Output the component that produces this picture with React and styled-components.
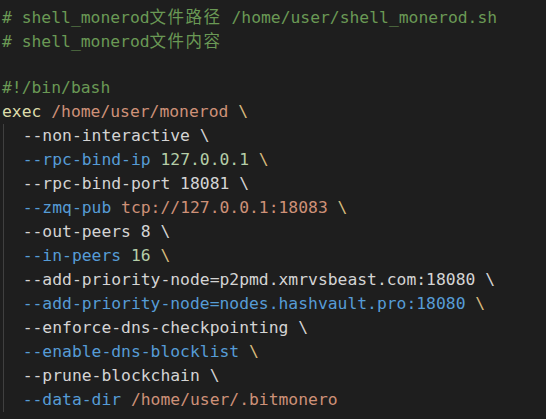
import React from "react";
import styled, { createGlobalStyle } from "styled-components";

const GlobalStyle = createGlobalStyle`
  html, body {
    margin: 0;
    padding: 0;
    background: #1e1e1e;
  }
`;

// token colours, vscode dark+ style
const colors = {
  comment: "#6a9955",
  cmd: "#dcdcaa",
  str: "#ce9178",
  esc: "#d7ba7d",
  flag: "#569cd6",
  num: "#b5cea8",
  plain: "#d4d4d4",
};

const header = [
  [["comment", "# shell_monerod"], ["cjk", "文件路径"], ["comment", " /home/user/shell_monerod.sh"]],
  [["comment", "# shell_monerod"], ["cjk", "文件内容"]],
  [],
  [["comment", "#!/bin/bash"]],
  [["cmd", "exec"], ["plain", " "], ["str", "/home/user/monerod"], ["plain", " "], ["esc", "\\"]],
];

const args = [
  [["plain", "--non-interactive \\"]],
  [["flag", "--rpc-bind-ip"], ["plain", " "], ["num", "127.0.0.1"], ["plain", " "], ["esc", "\\"]],
  [["plain", "--rpc-bind-port 18081 \\"]],
  [["flag", "--zmq-pub"], ["plain", " "], ["str", "tcp://127.0.0.1:18083"], ["plain", " "], ["esc", "\\"]],
  [["plain", "--out-peers 8 \\"]],
  [["flag", "--in-peers"], ["plain", " "], ["num", "16"], ["plain", " "], ["esc", "\\"]],
  [["plain", "--add-priority-node=p2pmd.xmrvsbeast.com:18080 \\"]],
  [["flag", "--add-priority-node=nodes.hashvault.pro:18080"], ["plain", " "], ["esc", "\\"]],
  [["plain", "--enforce-dns-checkpointing \\"]],
  [["flag", "--enable-dns-blocklist"], ["plain", " "], ["esc", "\\"]],
  [["plain", "--prune-blockchain \\"]],
  [["flag", "--data-dir"], ["plain", " "], ["str", "/home/user/.bitmonero"]],
];

const App = () => {
  const renderLine = (tokens, i) => (
    <Line key={i}>
      {tokens.length === 0 ? " " : null}
      {tokens.map(([kind, text], j) =>
        kind === "cjk" ? (
          <Cjk key={j}>{text}</Cjk>
        ) : (
          <Token key={j} kind={kind}>
            {text}
          </Token>
        )
      )}
    </Line>
  );

  return (
    <>
      <GlobalStyle />
      <Editor>
        {header.map(renderLine)}
        <Indented>{args.map(renderLine)}</Indented>
      </Editor>
    </>
  );
};

const Editor = styled.div`
  width: 546px;
  height: 419px;
  box-sizing: border-box;
  padding: 4px 0 0 2px;
  background: #1e1e1e;
  font-family: "DejaVu Sans Mono", "Noto Sans CJK SC", monospace;
  font-size: 16.35px;
  overflow: hidden;
`;

const Line = styled.div`
  height: 24px;
  line-height: 24px;
  white-space: pre;
`;

// indent guide on the continuation lines
const Indented = styled.div`
  border-left: 1px solid #404040;
  margin-left: 1px;
  padding-left: 18.7px;
`;

const Token = styled.span`
  color: ${({ kind }) => colors[kind]};
`;

const Cjk = styled.span`
  color: ${colors.comment};
  font-family: "Noto Sans CJK SC", sans-serif;
  font-size: 16.5px;
  letter-spacing: 1.5px;
`;

export default App;
